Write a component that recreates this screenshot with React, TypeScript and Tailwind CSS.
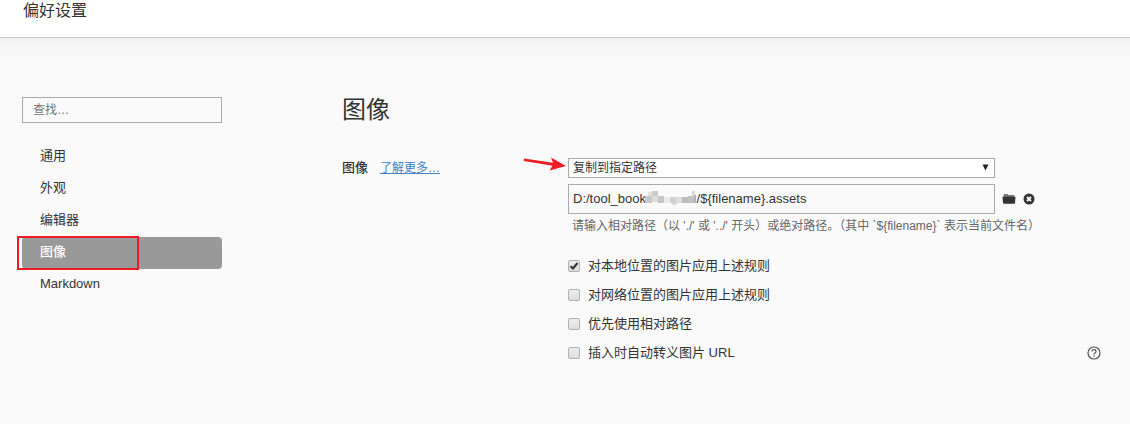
import React, { useState } from 'react'

const links = ["通用", "外观", "编辑器", "图像", "Markdown"]

const rules = [
  { id: "local", text: "对本地位置的图片应用上述规则" },
  { id: "network", text: "对网络位置的图片应用上述规则" },
  { id: "relative", text: "优先使用相对路径" },
  { id: "escape", text: "插入时自动转义图片 URL" },
]

// x, y, width, height, colour of each tile
const tiles: [number, number, number, number, string][] = [
  [0, 5, 3, 7, "#c8c8c8"], [3, 1, 4, 5, "#e0e0e0"], [7, 0, 6, 5, "#cccccc"], [2, 5, 5, 7, "#c9c9c9"],
  [7, 5, 6, 6, "#dcdcdc"], [13, 5, 6, 7, "#c6c6c6"], [19, 6, 6, 6, "#ececec"], [25, 6, 6, 6, "#cfcfcf"],
  [27, 12, 5, 2, "#dcdcdc"], [31, 6, 6, 6, "#dddddd"], [37, 6, 6, 6, "#bcbcbc"], [43, 5, 6, 7, "#c2c2c2"],
  [47, 0, 3, 6, "#d8d8d8"], [49, 4, 2, 8, "#b4b4b4"],
]

export default function App() {

  const [active, setActive] = useState("图像")
  const [path, setPath] = useState("D:/tool_book" + " ".repeat(14) + "/${filename}.assets")
  const [checked, setChecked] = useState<string[]>(["local"])

  const toggle = (id: string) =>
    setChecked(checked.includes(id) ? checked.filter((c) => c !== id) : [...checked, id])

  return (
<div className="min-h-screen bg-[#fafafa] text-[#333] text-[13px] font-['Liberation_Sans','Noto_Sans_CJK_SC',sans-serif]">

  {/* Header */}
  <header className="bg-white border-b border-[#ccc] px-[23px] pb-4">
    <h1 className="text-base leading-[21px]">偏好设置</h1>
  </header>
  <div className="h-6 bg-gradient-to-b from-[#f3f3f3] to-[#fafafa]" />

  <div className="flex pl-[22px] pr-7 pt-8">

    {/* Sidebar */}
    <aside className="w-[200px] shrink-0 pt-[3px]">
      <input type="search" aria-label="查找" placeholder="查找…"
        className="block w-full h-[26px] px-2.5 border border-[#aaa] text-xs bg-transparent placeholder:text-[#757575] outline-none"/>
      <nav className="mt-[18px]">
        <ul>
          {links.map((l) => (
            <li key={l} className="relative">
              <button
                onClick={() => setActive(l)}
                className={`block w-full h-8 pl-[18px] text-left leading-[30px] pb-0.5 rounded ${active === l ? "bg-[#999] text-white font-medium" : ""}`}>
                {l}
              </button>
              {l === "图像" && (
                <span className="absolute -left-[5px] -top-px w-[122px] h-[34px] border-2 border-[#ed1c24] pointer-events-none"/>
              )}
            </li>
          ))}
        </ul>
      </nav>
    </aside>

    {/* Content */}
    <main className="flex-1 min-w-0 ml-[120px]">
      <h2 className="text-2xl leading-8">图像</h2>

      <div className="flex mt-8">
        <div className="w-[226px] shrink-0 flex gap-3 leading-5">
          <label htmlFor="action" className="font-medium">图像</label>
          <a href="#more" className="text-xs leading-5 text-[#4183c4] underline">了解更多…</a>
        </div>

        <div className="flex-1 min-w-0">

          {/* Insert action */}
          <div className="relative w-4/5">
            <select id="action"
              className="block w-full h-5 pl-1 pr-6 border border-[#aaa] bg-white text-xs appearance-none outline-none">
              <option>复制到指定路径</option>
            </select>
            <svg className="absolute right-1.5 top-1.5 pointer-events-none" width="7" height="7" viewBox="0 0 7 7">
              <path d="M0.500 0.500h6L3.500 6.500z" fill="#222"/>
            </svg>
            <svg className="absolute -left-[45px] -top-1 pointer-events-none" width="44" height="20" viewBox="0 0 44 20">
              <path d="M1 4.500L30 8.800L28 3.500L43 12L26.500 16.500L29.500 11.800L0.800 7z" fill="#ed1c24"/>
            </svg>
          </div>

          {/* Path */}
          <div className="flex items-center mt-1.5">
            <div className="relative w-4/5">
              <input type="text" aria-label="路径" value={path} onChange={(e) => setPath(e.target.value)}
                className="block w-full h-[30px] px-1 pb-0.5 border border-[#aaa] bg-transparent outline-none"/>
              <svg className="absolute left-[77px] top-[7px] pointer-events-none" width="51" height="14" viewBox="0 0 51 14">
                {tiles.map(([x, y, w, h, c], i) => (
                  <rect key={i} x={x} y={y} width={w} height={h} fill={c}/>
                ))}
              </svg>
            </div>
            <button aria-label="打开文件夹" className="ml-[7px]">
              <svg width="14" height="12" viewBox="0 0 14 12">
                <path d="M1.500 4V2Q1.500 1 2.500 1H5.500L6.500 2H11.500Q12.500 2 12.500 3V4z" fill="#777"/>
                <path d="M0.500 3.800H13.500L13 10Q13 10.800 12 10.800H2Q1 10.800 1 10z" fill="#333"/>
              </svg>
            </button>
            <button aria-label="清除" className="ml-[7px]">
              <svg width="12" height="12" viewBox="0 0 12 12">
                <circle cx="6" cy="6" r="5.500" fill="#333"/>
                <path d="M4 4l4 4M8 4l-4 4" stroke="#fff" strokeWidth="1.800"/>
              </svg>
            </button>
          </div>
          <p className="mt-0.5 pl-1 text-xs leading-5 text-[#666]">
            {"请输入相对路径（以 './' 或 '../' 开头）或绝对路径。（其中 `${filename}` 表示当前文件名）"}
          </p>

          {/* Rules */}
          <div className="flex items-end mt-[15px]">
            <ul className="flex-1">
              {rules.map((r) => (
                <li key={r.id} className="flex items-center h-[29px]">
                  <span className="relative w-3 h-3">
                    <input type="checkbox" id={r.id} checked={checked.includes(r.id)} onChange={() => toggle(r.id)}
                      className="block w-3 h-3 appearance-none rounded-xs border border-[#b0b0b0] bg-gradient-to-b from-[#eee] to-[#ddd]"/>
                    {checked.includes(r.id) && (
                      <svg className="absolute inset-0 pointer-events-none" width="12" height="12" viewBox="0 0 12 12">
                        <path d="M2.500 6.200L5 8.500L9.500 3" fill="none" stroke="#333" strokeWidth="2.200"/>
                      </svg>
                    )}
                  </span>
                  <label htmlFor={r.id} className="pl-2">{r.text}</label>
                </li>
              ))}
            </ul>
            <button aria-label="帮助" className="h-[29px] pr-px">
              <svg width="14" height="14" viewBox="0 0 14 14" fill="none" stroke="#555">
                <circle cx="7" cy="7" r="6" strokeWidth="1.200"/>
                <path d="M5 5.600Q5 3.700 7 3.700T9 5.500Q9 6.400 8 7T7 8.500" strokeWidth="1.200"/>
                <path d="M7 9.500v1.300" strokeWidth="1.300"/>
              </svg>
            </button>
          </div>

        </div>
      </div>
    </main>

  </div>
</div>
  )
}
